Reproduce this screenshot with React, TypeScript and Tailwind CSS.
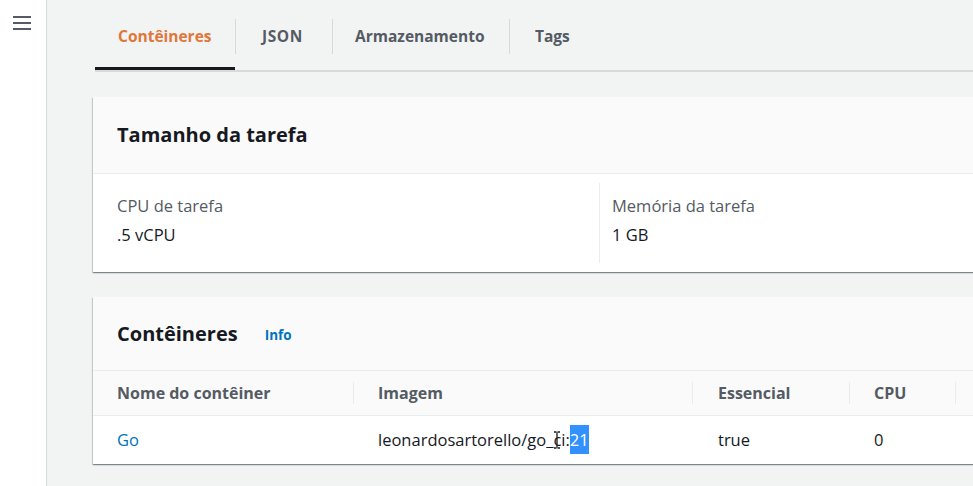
import React from "react";

export default function App() {
  const font = { fontFamily: '"Open Sans", "Noto Sans", Arial, sans-serif' };
  const shadow =
    "shadow-[0_1px_1px_0_rgba(0,28,36,0.3),1px_1px_1px_0_rgba(0,28,36,0.15),-1px_1px_1px_0_rgba(0,28,36,0.15)]";
  return (
    <div className="flex h-[486px] w-[973px] overflow-hidden bg-[#f2f3f3] text-[#16191f]" style={font}>
      {/* Sidebar */}
      <div className="w-[47px] shrink-0 border-r border-[#d5dbdb] bg-white pt-[16px] pl-[13px]">
        <div className="flex w-[18px] flex-col gap-[4px]">
          <div className="h-[2px] bg-[#545b64]" />
          <div className="h-[2px] bg-[#545b64]" />
          <div className="h-[2px] bg-[#545b64]" />
        </div>
      </div>

      {/* Main */}
      <div className="flex-1 overflow-hidden pl-[46px]">
        <div className="w-[960px]">
          {/* Tabs */}
          <div className="ml-[2px] flex border-b-2 border-[#d5dbdb] pt-[19px] pb-[16px]">
            <div className="relative flex h-[35px] w-[140px] items-center pl-[23px] text-[15.5px] font-bold text-[#e0773a]">
              Contêineres
              <div className="absolute -bottom-[16px] left-0 right-0 h-[3px] bg-[#16191f]" />
            </div>
            <div className="h-[35px] w-px bg-[#d5dbdb]" />
            <div className="flex h-[35px] w-[96px] items-center pl-[26px] text-[15.5px] font-bold tracking-[0.6px] text-[#545b64]">JSON</div>
            <div className="h-[35px] w-px bg-[#d5dbdb]" />
            <div className="flex h-[35px] w-[176px] items-center pl-[22px] text-[15.5px] font-bold text-[#545b64]">Armazenamento</div>
            <div className="h-[35px] w-px bg-[#d5dbdb]" />
            <div className="flex h-[35px] items-center px-[25px] text-[15.5px] font-bold text-[#545b64]">Tags</div>
          </div>

          {/* Card 1 */}
          <div className={`mt-[25px] bg-white ${shadow}`}>
            <div className="flex h-[77px] items-center border-b border-[#eaeded] bg-[#fafafa] pl-[24px]">
              <h2 className="text-[20px] font-bold leading-none">Tamanho da tarefa</h2>
            </div>
            <div className="flex py-[9px]">
              <div className="h-[80px] w-[507px] border-r border-[#eaeded] pt-[12px] pl-[24px]">
                <div className="text-[16.5px] leading-[22px] text-[#545b64]">CPU de tarefa</div>
                <div className="mt-[7px] text-[16.5px] leading-[22px]">.5 vCPU</div>
              </div>
              <div className="flex-1 pt-[12px] pl-[12px]">
                <div className="text-[16.5px] leading-[22px] text-[#545b64]">Memória da tarefa</div>
                <div className="mt-[7px] text-[16.5px] leading-[22px]">1 GB</div>
              </div>
            </div>
          </div>

          {/* Card 2 */}
          <div className={`mt-[25px] bg-white ${shadow}`}>
            <div className="flex h-[73px] items-center bg-[#fafafa] pl-[24px]">
              <h2 className="text-[20px] font-bold leading-none">Contêineres</h2>
              <span className="ml-[27px] mt-[4px] text-[13.5px] font-bold text-[#0073bb]">Info</span>
            </div>
            <div className="flex h-[46px] items-center border-y border-[#eaeded] bg-[#fafafa] text-[16px] font-bold text-[#545b64]">
              <div className="w-[260px] pl-[24px]">Nome do contêiner</div>
              <div className="h-[22px] w-px bg-[#eaeded]" />
              <div className="w-[338px] pl-[24px]">Imagem</div>
              <div className="h-[22px] w-px bg-[#eaeded]" />
              <div className="w-[156px] pl-[25px]">Essencial</div>
              <div className="h-[22px] w-px bg-[#eaeded]" />
              <div className="w-[105px] pl-[24px]">CPU</div>
              <div className="h-[22px] w-px bg-[#eaeded]" />
            </div>
            <div className="flex h-[48px] items-center text-[16.5px]">
              <div className="w-[261px] pl-[24px] text-[#0073bb]">Go</div>
              <div className="w-[339px] whitespace-nowrap pl-[24px]">
                leonardosartorello/go_
                <span className="relative">
                  c
                  <svg className="absolute left-[0px] top-[3px]" width="8" height="18" viewBox="0 0 8 18">
                    <path d="M1 1h2.5M4.5 1H7M4 1.5v15M1 17h2.5M4.5 17H7" stroke="#16191f" strokeWidth="1.3" fill="none" />
                  </svg>
                </span>
                i:<span className="bg-[#3390ff] py-[3px] text-white">21</span>
              </div>
              <div className="w-[157px] pl-[25px]">true</div>
              <div className="w-[106px] pl-[24px]">0</div>
            </div>
          </div>
        </div>
      </div>
    </div>
  );
}
